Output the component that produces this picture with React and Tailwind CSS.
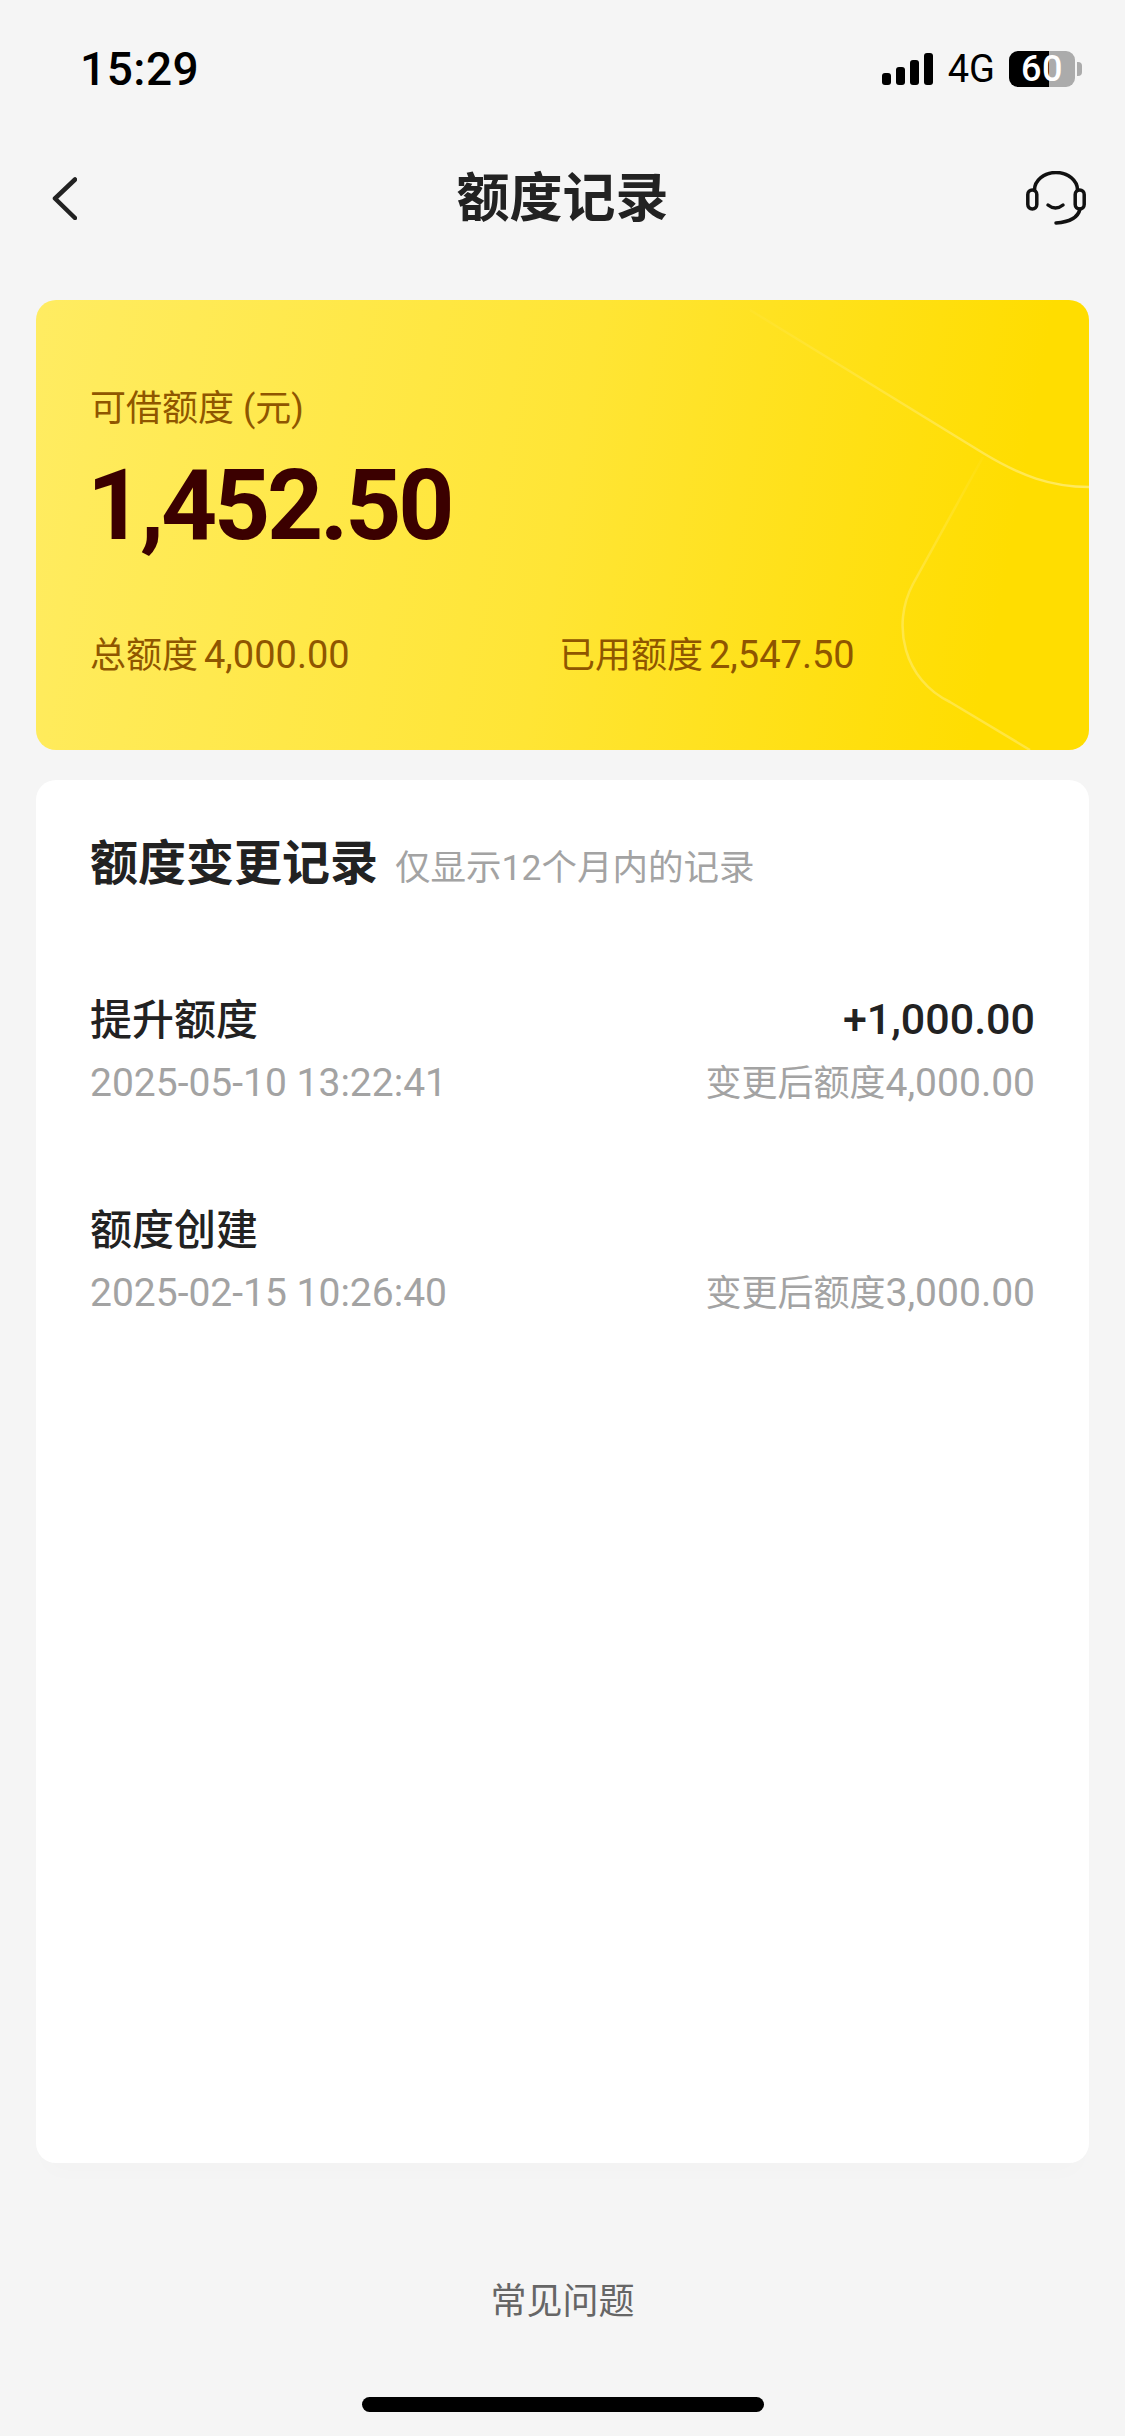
import React from 'react';

const fontStack = "font-['Roboto','Noto_Sans_CJK_SC',sans-serif]";

const records = [
  { title: '提升额度', time: '2025-05-10 13:22:41', delta: '+1,000.00', after: '4,000.00' },
  { title: '额度创建', time: '2025-02-15 10:26:40', delta: '', after: '3,000.00' },
];

const StatusBar = () => (
  <div className="h-[138px] pl-[80px] pr-[43px] flex items-center justify-between text-black">
    <span className="text-[46px] leading-none font-medium tracking-[0.5px]">15:29</span>
    <div className="flex items-center">
      <div className="flex items-end gap-[5px] h-[32px]">
        <div className="w-[9px] h-[12px] rounded-[3px] bg-black" />
        <div className="w-[9px] h-[18px] rounded-[3px] bg-black" />
        <div className="w-[9px] h-[25px] rounded-[3px] bg-black" />
        <div className="w-[9px] h-[32px] rounded-[3px] bg-black" />
      </div>
      <span className="ml-[15px] text-[38px] leading-none">4G</span>
      <div className="ml-[14px] relative flex w-[66px] h-[36px]">
        <div className="w-[40px] rounded-l-[9px] bg-black" />
        <div className="flex-1 rounded-r-[9px] bg-[#ababab]" />
        <span className="absolute inset-0 flex items-center justify-center text-[36px] leading-none font-medium tracking-[0.5px] text-white">60</span>
      </div>
      <div className="ml-[2px] w-[5px] h-[14px] rounded-r-[4px] bg-[#ababab]" />
    </div>
  </div>
);

const NavBar = () => (
  <div className="h-[120px] px-[39px] grid grid-cols-[1fr_auto_1fr] items-center">
    <svg className="ml-[13px]" width="25" height="43" viewBox="0 0 25 43" fill="none">
      <path d="M23 2.5 L3 21.5 L23 41" stroke="#222" strokeWidth="4.5" strokeLinecap="round" strokeLinejoin="round" />
    </svg>
    <h1 className="mt-[2px] text-[53px] leading-none font-bold text-[#222]">额度记录</h1>
    <svg className="justify-self-end" width="60" height="54" viewBox="0 0 60 54" fill="none" stroke="#111" strokeWidth="3.5" strokeLinecap="round">
      <path d="M8.5 19 A21.5 17.5 0 0 1 51.5 19" />
      <rect x="1.8" y="19" width="9" height="19" rx="4.5" />
      <rect x="49.2" y="19" width="9" height="19" rx="4.5" />
      <path d="M22 34 Q29.5 40 37 34" />
      <path d="M54 38 C52 47 44 51 30 52" />
    </svg>
  </div>
);

const QuotaCard = () => (
  <div className="relative mt-[42px] mx-[36px] h-[450px] rounded-[20px] overflow-hidden bg-[linear-gradient(100deg,#ffec62_0%,#ffe535_50%,#ffdd00_90%)] pl-[54px] pt-[87px]">
    <svg className="absolute inset-0" width="1053" height="450" viewBox="0 0 1053 450" fill="none" strokeWidth="2.5">
      <defs>
        <linearGradient id="waveTop" x1="714" y1="10" x2="1053" y2="187" gradientUnits="userSpaceOnUse">
          <stop offset="0" stopColor="#fff" stopOpacity="0.03" />
          <stop offset="1" stopColor="#fff" stopOpacity="0.38" />
        </linearGradient>
        <linearGradient id="waveBottom" x1="947" y1="157" x2="870" y2="330" gradientUnits="userSpaceOnUse">
          <stop offset="0" stopColor="#fff" stopOpacity="0.03" />
          <stop offset="1" stopColor="#fff" stopOpacity="0.25" />
        </linearGradient>
      </defs>
      <path d="M714 10 L947 153 C985 176 1015 187 1053 187" stroke="url(#waveTop)" />
      <path d="M947 157 L877 284 C855 325 868 380 914 402 L994 450" stroke="url(#waveBottom)" />
    </svg>
    <div className="relative text-[36px] leading-[44px] text-[#8f5600]">可借额度 (元)</div>
    <div className="relative mt-[25px] -ml-[3px] text-[98px] leading-[100px] font-bold tracking-[-3.2px] text-[#3b0000]">1,452.50</div>
    <div className="relative mt-[77px] flex items-baseline text-[36px] leading-[44px] text-[#8f5600]">
      <span className="w-[469px]">总额度<span className="ml-[6px] text-[38px]">4,000.00</span></span>
      <span>已用额度<span className="ml-[6px] text-[38px]">2,547.50</span></span>
    </div>
  </div>
);

const RecordRow = ({ title, time, delta, after }) => (
  <div className="h-[210px]">
    <div className="flex items-center justify-between h-[60px]">
      <span className="text-[42px] leading-none font-medium text-[#222]">{title}</span>
      <span className="-mt-[4px] text-[43px] leading-none font-medium text-[#222]">{delta}</span>
    </div>
    <div className="flex items-center justify-between h-[44px] mt-[10px] text-[#a3a3a3]">
      <span className="text-[39px] leading-none">{time}</span>
      <span className="text-[36px] leading-none">变更后额度<span className="text-[39px]">{after}</span></span>
    </div>
  </div>
);

const RecordCard = () => (
  <div className="mt-[30px] mx-[36px] h-[1383px] rounded-[20px] bg-white px-[54px] pt-[54px] shadow-[0_18px_24px_-10px_rgba(0,0,0,0.015)]">
    <div className="flex items-baseline">
      <h2 className="text-[48px] leading-[60px] font-bold text-[#222]">额度变更记录</h2>
      <span className="ml-[17px] text-[35.5px] text-[#a3a3a3]">仅显示12个月内的记录</span>
    </div>
    <div className="mt-[96px]">
      {records.map((r) => (
        <RecordRow key={r.time} {...r} />
      ))}
    </div>
  </div>
);

export default function App() {
  return (
    <div className={`w-[1125px] h-[2436px] bg-[#f5f5f5] overflow-hidden ${fontStack}`}>
      <StatusBar />
      <NavBar />
      <QuotaCard />
      <RecordCard />
      <div className="mt-[117px] text-center text-[36px] leading-[44px] text-[#666]">常见问题</div>
      <div className="mt-[73px] mx-auto w-[402px] h-[15px] rounded-[8px] bg-black" />
    </div>
  );
}
